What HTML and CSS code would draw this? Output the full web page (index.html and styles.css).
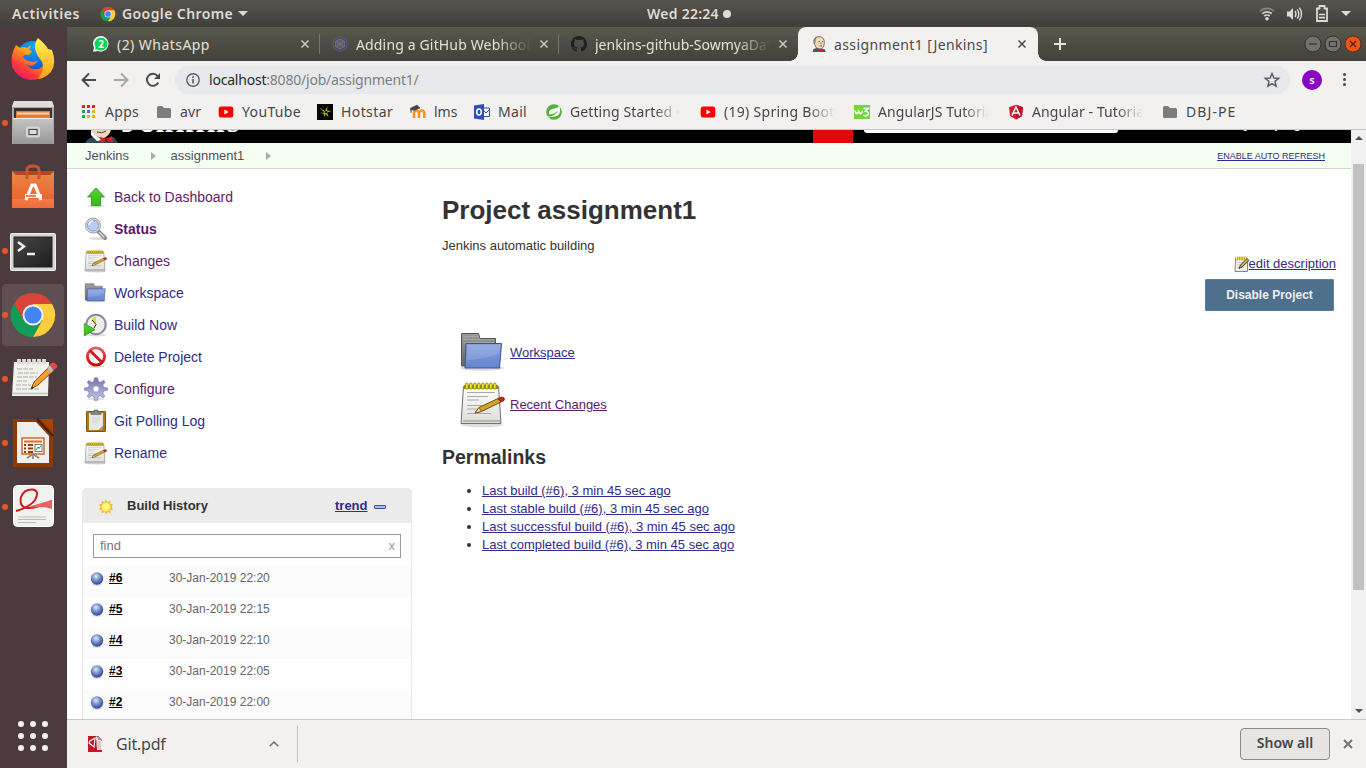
FILE: index.html
```html
<!DOCTYPE html>
<html lang="en">
<head>
<meta charset="utf-8">
<title>assignment1 [Jenkins]</title>
<link rel="stylesheet" href="styles.css">
</head>
<body>
<svg class="defs" width="0" height="0">
  <defs>
    <linearGradient id="gPaper" x1="0" y1="0" x2="0" y2="1"><stop offset="0" stop-color="#fff"/><stop offset="1" stop-color="#dcdcda"/></linearGradient>
    <linearGradient id="gBlue" x1="0" y1="0" x2="0" y2="1"><stop offset="0" stop-color="#8aa3dc"/><stop offset="1" stop-color="#6482ce"/></linearGradient>
    <linearGradient id="gGrey" x1="0" y1="0" x2="0" y2="1"><stop offset="0" stop-color="#9a9a98"/><stop offset="1" stop-color="#666"/></linearGradient>
    <linearGradient id="gGreen" x1="0" y1="0" x2="0" y2="1"><stop offset="0" stop-color="#57d03d"/><stop offset="1" stop-color="#2fc00a"/></linearGradient>
    <linearGradient id="gGear" x1="0" y1="0" x2="0" y2="1"><stop offset="0" stop-color="#7278b2"/><stop offset="1" stop-color="#c4c0e6"/></linearGradient>
    <linearGradient id="gRed" x1="0" y1="0" x2="0" y2="1"><stop offset="0" stop-color="#ee5a5a"/><stop offset="1" stop-color="#cc0000"/></linearGradient>
    <radialGradient id="gBall" cx=".42" cy=".33" r=".65"><stop offset="0" stop-color="#e4eee8"/><stop offset=".45" stop-color="#8097d0"/><stop offset="1" stop-color="#34479c"/></radialGradient>
    <radialGradient id="gSun"><stop offset="0" stop-color="#ffffa8"/><stop offset="1" stop-color="#fdf04a"/></radialGradient>
    <linearGradient id="gFox" x1="0.8" y1="0" x2=".1" y2="1"><stop offset="0" stop-color="#ffe226"/><stop offset=".35" stop-color="#ff9a16"/><stop offset=".68" stop-color="#ff3a3c"/><stop offset="1" stop-color="#e00b7a"/></linearGradient>
    <linearGradient id="gFlame" x1="0" y1="0" x2="0" y2="1"><stop offset="0" stop-color="#fff44f"/><stop offset="1" stop-color="#ffa018"/></linearGradient>
    <radialGradient id="gGlobe" cx=".5" cy=".15" r=".9"><stop offset="0" stop-color="#12a8f0"/><stop offset=".6" stop-color="#1365d8"/><stop offset="1" stop-color="#22306e"/></radialGradient>
    <linearGradient id="gBag" x1="0" y1="0" x2="0" y2="1"><stop offset="0" stop-color="#e88a48"/><stop offset=".75" stop-color="#ec6530"/><stop offset=".76" stop-color="#f37b48"/><stop offset="1" stop-color="#ef6c38"/></linearGradient>
    <linearGradient id="gTerm" x1="0" y1="0" x2="1" y2="1"><stop offset="0" stop-color="#444"/><stop offset=".5" stop-color="#333"/><stop offset="1" stop-color="#1c1c1c"/></linearGradient>
    <linearGradient id="gCab" x1="0" y1="0" x2="0" y2="1"><stop offset="0" stop-color="#c4c4c4"/><stop offset="1" stop-color="#989898"/></linearGradient>
    <symbol id="chrome" viewBox="0 0 48 48">
      <path d="M24 24 4.9 13A22 22 0 0 1 43.1 13Z" fill="#da4437"/>
      <path d="M24 24H3L4.9 13A22 22 0 0 0 24 46L33 29Z" fill="#119d58"/>
      <path d="M24 24V13H43.1A22 22 0 0 1 24 46L33.5 29Z" fill="#ffcd40"/>
      <path d="M5 13 14.5 29 17 15 24 13Z" fill="#da4437"/>
      <path d="M14.5 29A11 11 0 0 0 29 34L22.5 46A22 22 0 0 1 4.9 13Z" fill="#119d58"/>
      <circle cx="24" cy="24" r="10.5" fill="#f1f1f1"/><circle cx="24" cy="24" r="8.6" fill="#4285f4"/>
    </symbol>
    <symbol id="pad" viewBox="0 0 48 48">
      <ellipse cx="23" cy="45" rx="21" ry="2" fill="#0002"/>
      <path d="M4.500 6.500H39.500L42 43.500H2Z" fill="url(#gPaper)" stroke="#70706c"/>
      <path d="M4 41H41" stroke="#aaa9a4" stroke-width="1.500"/>
      <rect x="5" y="5" width="34" height="4" fill="#8d8a35"/>
      <path d="M8 12.500H36M8 16.500H29M8 20H20M8 25.500H26M8 29H22M8 33.500H32" stroke="#aaa"/>
      <g fill="#f2e63c" stroke="#8f8706" stroke-width=".9"><rect x="6.500" y="3" width="2.600" height="6" rx="1.300"/><rect x="10.500" y="3" width="2.600" height="6" rx="1.300"/><rect x="14.500" y="3" width="2.600" height="6" rx="1.300"/><rect x="18.500" y="3" width="2.600" height="6" rx="1.300"/><rect x="22.500" y="3" width="2.600" height="6" rx="1.300"/><rect x="26.500" y="3" width="2.600" height="6" rx="1.300"/><rect x="30.500" y="3" width="2.600" height="6" rx="1.300"/><rect x="34.500" y="3" width="2.600" height="6" rx="1.300"/></g>
      <path d="M16 33 20 27.500 39 18.500 42 22 22.500 31.500Z" fill="#d3a42a" stroke="#72500c"/>
      <path d="M16 33 20 27.500 22.500 31.500Z" fill="#e9d9a6" stroke="#72500c" stroke-width=".8"/>
      <path d="M39 18.500 43 17Q46.500 18 45 20.500L42 22Z" fill="#e01b1b" stroke="#7c2a1a"/>
    </symbol>
    <symbol id="folder" viewBox="0 0 48 48">
      <ellipse cx="23" cy="40" rx="22" ry="3" fill="#0002"/>
      <path d="M2.500 38V5.500H19.500L21 10.500H36.500V38Z" fill="url(#gGrey)" stroke="#555"/>
      <path d="M4 8.500H20M4 11.500H35M4 14.500H35" stroke="#aaa" stroke-width=".8"/>
      <path d="M7 15.500H42.500L40.500 40H6Z" fill="url(#gBlue)" stroke="#3c50a4"/>
      <path d="M8 17H41L40.500 25Q24 32 7.500 32Z" fill="#fff" opacity=".13"/>
    </symbol>
    <symbol id="ball" viewBox="0 0 14 14"><ellipse cx="7" cy="12.500" rx="5" ry="1.200" fill="#0002"/><circle cx="7" cy="6.500" r="6.200" fill="url(#gBall)"/></symbol>
    <symbol id="bfolder" viewBox="0 0 16 16"><path d="M1 3.500Q1 2 2.500 2H6L8 4H13.500Q15 4 15 5.500V12.500Q15 14 13.500 14H2.500Q1 14 1 12.500Z" fill="#7c7c7c"/></symbol>
    <symbol id="yt" viewBox="0 0 16 16"><rect x=".7" y="2.500" width="14.600" height="11" rx="2.500" fill="#f00"/><path d="M6.400 5.500V10.500L10.600 8Z" fill="#fff"/></symbol>
    <symbol id="cross" viewBox="0 0 10 10"><path d="M1.500 1.500 8.500 8.500M8.500 1.500 1.500 8.500" stroke="currentColor" stroke-width="1.500" fill="none"/></symbol>
    <symbol id="butler" viewBox="0 0 16 16">
      <path d="M1.500 16 2.500 13 7 11.500 14 13.500 14.500 16Z" fill="#3f5a72"/>
      <path d="M3 7Q2 .8 8 .6 13.500.6 13.300 7 13 12.800 8.800 13 5 13 4.300 10Z" fill="#f0dcb8" stroke="#4a423a" stroke-width=".7"/>
      <path d="M2.900 8Q1.500 1.500 6.500.8 4.500 3 4.700 5L4 8Z" fill="#8a857c"/>
      <path d="M7.500 5.500H9M11 5.500H12M8.500 10H11M10 6.500V8" stroke="#544" stroke-width=".8"/>
      <path d="M7 13 9.500 14 12 13V16L9.500 15 7 16Z" fill="#e02020"/>
    </symbol>
  </defs>
</svg>

<header class="panel">
  <span class="activities">Activities</span>
  <svg class="i16"><use href="#chrome"/></svg>
  <span class="appname">Google Chrome</span><i class="caret"></i>
  <span class="clock">Wed 22:24<i></i></span>
  <span class="tray">
    <svg width="16" height="16" viewBox="0 0 16 16" fill="none" stroke="#d0cfca" stroke-width="1.700"><path d="M1 5.200Q8-.4 15 5.200" opacity=".45"/><path d="M3.200 7.600Q8 4 12.800 7.600M5.200 10Q8 8 10.800 10"/><circle cx="8" cy="12.800" r="1.800" fill="#dfdbd2" stroke="none"/></svg>
    <svg width="17" height="16" viewBox="0 0 17 16"><path d="M1 5.500H3.500L7 2V14L3.500 10.500H1Z" fill="#dfdbd2"/><path d="M9 5Q11 8 9 11M11.200 3.300Q14.300 8 11.200 12.700M13.400 1.700Q17.600 8 13.400 14.300" fill="none" stroke="#dfdbd2" stroke-width="1.400"/></svg>
    <svg width="12" height="17" viewBox="0 0 12 17"><path d="M1 3.500H3.500V1H8.500V3.500H11V16H1Z" fill="none" stroke="#dfdbd2" stroke-width="1.800"/><path d="M3 9.500H9M3 12.700H9" stroke="#dfdbd2" stroke-width="1.700"/></svg>
    <i class="caret"></i>
  </span>
</header>

<div class="desktop">
  <nav class="dock">
    <div class="launch"><svg viewBox="0 0 48 48">
      <circle cx="24" cy="24" r="18" fill="url(#gGlobe)"/>
      <path d="M7 10 11 13Q14 11 18 13L22 10 20 15 23 16 20 20Q14 19 14 22L17 25Q26 29 29 25 24 34 17 29 23 37 32 33 40 26 36 17 44 23 40 33 35 45 22 45 8 44 3 31 1 20 7 10Z" fill="url(#gFox)"/>
      <path d="M29 3Q38 11 39 14L43 15Q48 28 42 37 35 44 29 44 38 32 31 24 22 12 29 3Z" fill="url(#gFlame)"/></svg></div>
    <div class="launch run"><svg viewBox="0 0 48 48">
      <path d="M5 2H43L45 7V45H3V7Z" fill="#a9a9a9"/><path d="M5 2H43L45 8H3Z" fill="#dedede"/><rect x="5" y="9" width="38" height="13" fill="#38322d"/>
      <path d="M7 12H41V20H7Z" fill="#ea7a2c"/><path d="M8 14.500H40" stroke="#f8d8b6" stroke-width="2"/><path d="M4 19H44V45H4Z" fill="url(#gCab)"/><path d="M4 19.500H44" stroke="#eee"/>
      <rect x="18" y="28.500" width="12" height="9" rx="1" fill="#b4b4b4" stroke="#d6d6d6" stroke-width="2"/><rect x="20" y="30.500" width="8" height="5" fill="#ddd" stroke="#444"/></svg></div>
    <div class="launch"><svg viewBox="0 0 48 48">
      <path d="M3 8H45V14H3Z" fill="#b6441f"/><path d="M3 8 7 12H41L45 8V45H3Z" fill="url(#gBag)"/><path d="M18 16V7Q18 3 24 3T30 7V16" fill="none" stroke="#c9542c" stroke-width="3"/>
      <path d="M17 37 23 22H26L32 37" fill="none" stroke="#fff" stroke-width="3.200"/><path d="M16 33H33" stroke="#fff" stroke-width="3.800"/><path d="M17 33H27" stroke="#ee6932" stroke-width="1.700"/></svg></div>
    <div class="launch run"><svg viewBox="0 0 48 48">
      <rect x="1.500" y="6.500" width="45" height="37" rx="1" fill="#d6d6d4" stroke="#eee"/><rect x="5" y="10" width="38" height="30" fill="url(#gTerm)" stroke="#222"/>
      <path d="M9 15 15 19.500 9 24M18 27H26" fill="none" stroke="#eee" stroke-width="2.500"/></svg></div>
    <div class="launch run active"><svg viewBox="0 0 48 48"><use href="#chrome"/></svg></div>
    <div class="launch run"><svg viewBox="0 0 48 48">
      <path d="M5 7H40L39 41H3Z" fill="#f2f2ec"/><path d="M3 38.500H39" stroke="#cbcbc5" stroke-width="2"/>
      <path d="M8 14H24M9 18H29M8 22H28M8 26H18M7 30H22M7 34H30" stroke="#999" stroke-width=".8" stroke-dasharray="5 1"/>
      <g fill="none" stroke="#ddd" stroke-width="1.800"><path d="M9 10V5H11V9M14 10V5H16V9M19 10V5H21V9M24 10V5H26V9M29 10V5H31V9M34 10V5H36V9"/></g>
      <path d="M22 34 25 27 39 13 43 17 29 30Z" fill="#f29c38" stroke="#8c4d12"/><path d="M38 13 41 10 45 15 42 18Z" fill="#bbb"/><path d="M41 9Q44 6 47 9T46 14L44 15Z" fill="#e44"/><path d="M22 34 23 31 25 33Z" fill="#222"/></svg></div>
    <div class="launch run"><svg viewBox="0 0 48 48">
      <path d="M4 0H31L44 13V48H4Z" fill="#8d3a05"/><path d="M31 0H44V13Z" fill="#a94207"/><path d="M8 3H27L40 17V44H8Z" fill="#eee"/><path d="M28 0 44 17" stroke="#4b1e04" stroke-width="2"/>
      <rect x="13" y="19" width="22" height="16" fill="#fff3e8" stroke="#c25818" stroke-width="1.300"/><path d="M15 22.500H33" stroke="#d9702c" stroke-width="2"/><path d="M15 26H24M15 29.500H24M15 33H24" stroke="#a13c08" stroke-width="1.800" stroke-dasharray="2 2 6"/>
      <rect x="26" y="25.500" width="7" height="7" fill="#fff" stroke="#777"/><path d="M27 31 29 28 30 29.500 32 26.500" fill="none" stroke="#289b38"/><path d="M18 39 24 35 30 39M24 35V40" fill="none" stroke="#888" stroke-width="1.700"/></svg></div>
    <div class="launch run"><svg viewBox="0 0 48 48">
      <rect x="4.500" y="2.500" width="40" height="41" rx="4" fill="#f1f1f0" stroke="#fff"/>
      <path d="M7 28Q21 24 26 17 31 8 24 6.500 15 6 12 14 10 23 17 25 26 26 43 18" fill="none" stroke="#d01c1c" stroke-width="2"/><path d="M22 23 43 17V26Q36 23 22 24.500Z" fill="#e46464"/><path d="M9 34H37M9 36.500H37M9 39.500H27" stroke="#bbb"/></svg></div>
    <div class="grid"><i></i><i></i><i></i><i></i><i></i><i></i><i></i><i></i><i></i></div>
  </nav>

  <div class="browser">
    <div class="tabs">
      <div class="tab">
        <svg class="i16" viewBox="0 0 16 16"><path d="M.2 15.800 1 11.500A7.700 7.700 0 1 1 5 15Z" fill="#fff"/><circle cx="8" cy="8" r="6.500" fill="#06d755"/><path d="M2 14 2.500 11 5 13Z" fill="#06d755"/><text x="8" y="11.700" text-anchor="middle" class="badge">2</text></svg>
        <span class="tl t-wa">(2) WhatsApp</span><svg class="x"><use href="#cross"/></svg></div>
      <div class="tab">
        <svg class="i16" viewBox="0 0 16 16" fill="none"><path d="M8 .8 14.500 4.400V11.600L8 15.200 1.500 11.600V4.400Z" stroke="#5c4f91" stroke-width="1.200"/><path d="M8 3 12.400 5.500V10.500L8 13 3.600 10.500V5.500ZM3.600 5.500 12.400 10.500M3.600 10.500 12.400 5.500M8 3V13M5.800 4.300 5.800 11.700M10.200 4.300V11.700" stroke="#76748a" stroke-width=".9"/></svg>
        <span class="tl fade t-gh">Adding a GitHub Webhook</span><svg class="x"><use href="#cross"/></svg></div>
      <div class="tab last">
        <svg class="i16" viewBox="0 0 16 16"><path fill="#1e2023" d="M8 0C3.580 0 0 3.580 0 8c0 3.540 2.290 6.530 5.470 7.590.4.070.55-.17.55-.38 0-.19-.01-.82-.01-1.490-2.010.37-2.530-.49-2.690-.94-.09-.23-.48-.94-.82-1.130-.28-.15-.68-.52-.01-.53.63-.01 1.080.58 1.230.82.72 1.210 1.870.87 2.330.66.070-.52.28-.87.51-1.070-1.780-.2-3.640-.89-3.640-3.950 0-.87.31-1.590.82-2.150-.08-.2-.36-1.020.08-2.120 0 0 .67-.21 2.200.82.64-.18 1.320-.27 2-.27s1.360.09 2 .27c1.530-1.040 2.200-.82 2.200-.82.44 1.100.16 1.920.08 2.120.51.56.82 1.270.82 2.150 0 3.070-1.870 3.750-3.650 3.950.29.25.54.73.54 1.480 0 1.070-.01 1.930-.01 2.200 0 .21.15.46.55.38A8.010 8.010 0 0 0 16 8c0-4.420-3.580-8-8-8Z"/></svg>
        <span class="tl fade t-je">jenkins-github-SowmyaDas</span><svg class="x"><use href="#cross"/></svg></div>
      <div class="tab current">
        <svg class="i16"><use href="#butler"/></svg>
        <span class="tl t-as">assignment1 [Jenkins]</span><svg class="x"><use href="#cross"/></svg></div>
      <svg class="plus" viewBox="0 0 12 12"><path d="M6 0V12M0 6H12" stroke="#e4e3dc" stroke-width="2"/></svg>
      <div class="winbtns">
        <svg viewBox="0 0 18 18"><circle cx="9" cy="9" r="8" fill="#74726b" stroke="#33322d"/><path d="M5 9H13" stroke="#33322d" stroke-width="1.200"/></svg>
        <svg viewBox="0 0 18 18"><circle cx="9" cy="9" r="8" fill="#74726b" stroke="#33322d"/><path d="M5.500 6.500H12.500V11.500H5.500Z" fill="none" stroke="#33322d" stroke-width="1.200"/></svg>
        <svg viewBox="0 0 18 18"><circle cx="9" cy="9" r="8" fill="#ed5518" stroke="#622c17"/><path d="M6 6 12 12M12 6 6 12" stroke="#552109" stroke-width="1.400"/></svg>
      </div>
    </div>

    <div class="toolbar">
      <svg class="nav" viewBox="0 0 16 16"><path d="M15 8H2M8 1.500 1.500 8 8 14.500" fill="none" stroke="#48494b" stroke-width="1.900"/></svg>
      <svg class="nav" viewBox="0 0 16 16"><path d="M1 8H14M8 1.500 14.500 8 8 14.500" fill="none" stroke="#a9a9a9" stroke-width="1.900"/></svg>
      <svg class="nav" viewBox="0 0 16 16"><path d="M13.300 10.500A6 6 0 1 1 12.600 4" fill="none" stroke="#48494b" stroke-width="1.900"/><path d="M15 1V7H9Z" fill="#48494b"/></svg>
      <div class="omni">
        <svg width="14" height="14" viewBox="0 0 14 14"><circle cx="7" cy="7" r="6.200" fill="none" stroke="#5c5f63" stroke-width="1.400"/><path d="M7 6V10.500M7 3.300V4.900" stroke="#5c5f63" stroke-width="1.600"/></svg>
        <span class="url"><b>localhost</b>:8080/job/assignment1/</span>
        <svg class="star" viewBox="0 0 16 16"><path d="M8 1.500 9.900 6 14.700 6.300 11 9.400 12.200 14.200 8 11.600 3.800 14.200 5 9.400 1.300 6.300 6.100 6Z" fill="none" stroke="#55585c" stroke-width="1.400"/></svg>
      </div>
      <span class="avatar">s</span>
      <span class="dots"><i></i><i></i><i></i></span>
    </div>

    <div class="marks">
      <a class="m-apps"><svg class="i16" viewBox="0 0 16 16"><path d="M1 1H4V4H1ZM6 1H9V4H6ZM11 1H14V4H11Z" fill="#e8201c"/><path d="M1 6H4V9H1Z" fill="#1fa55a"/><path d="M6 6H9V9H6Z" fill="#4468e8"/><path d="M11 6H14V9H11ZM6 11H9V14H6ZM11 11H14V14H11Z" fill="#f2ad16"/><path d="M1 11H4V14H1Z" fill="#1fa55a"/></svg><span>Apps</span></a>
      <a class="m-avr"><svg class="i16"><use href="#bfolder"/></svg><span>avr</span></a>
      <a class="m-yt"><svg class="i16"><use href="#yt"/></svg><span>YouTube</span></a>
      <a class="m-hot"><svg class="i16" viewBox="0 0 16 16"><rect width="16" height="16" fill="#050805"/><path d="M7.500 8.500 2.500 3.500 8 7 10.500 2 10 6.500 14.500 7 10 8.500 11.500 13 8 10 7.500 13.500 6.500 9.500 2.500 9Z" fill="#a3b82c"/><circle cx="9" cy="8" r="1.300" fill="#111"/></svg><span>Hotstar</span></a>
      <a class="m-lms"><svg class="i16" viewBox="0 0 16 16"><path d="M4 14V8.500Q6.200 4.500 9 8.500V14M9 8.500Q12.500 4 14.300 8.500V14" fill="none" stroke="#f7931e" stroke-width="2.500"/><path d="M0 4.500 7 1 10 4 4 6.500 1.500 5.500 1 9" fill="#444" stroke="#444" stroke-width=".6"/></svg><span>lms</span></a>
      <a class="m-mail"><svg class="i16" viewBox="0 0 16 16"><path d="M9 4H15.500V12.500H9" fill="#fff" stroke="#2f4fc0"/><path d="M9 6 12 9 15.500 5.500" fill="none" stroke="#2f4fc0"/><path d="M0 1.500 10 0V16L0 14.500Z" fill="#2c4dc4"/><ellipse cx="5" cy="8" rx="2.300" ry="3" fill="none" stroke="#fff" stroke-width="1.600"/></svg><span>Mail</span></a>
      <a class="long m-gs"><svg class="i16" viewBox="0 0 16 16"><circle cx="8" cy="8" r="7.800" fill="#52b13a"/><path d="M13.500 2Q15.500 9 11.500 11.800 8 13.500 3.500 12.700 10 11 12.500 6.500 8 10.500 3.500 10.500 1.500 6.500 6 5 11 4.500 13.500 2Z" fill="#f4fbf2"/><circle cx="3" cy="13" r=".7" fill="#fff"/></svg><span>Getting Started ·</span></a>
      <a class="long m-sb"><svg class="i16"><use href="#yt"/></svg><span>(19) Spring Boot</span></a>
      <a class="long m-aj"><svg class="i16" viewBox="0 0 16 16"><rect y="1" width="16" height="14" fill="#74d53c"/><path d="M1 6.500Q1.500 10 3.200 9.500L4.500 7 6 9.500Q7.500 10 8.500 7M9.500 4.500H14L11.500 7Q15 7.500 14 10.500 12 13 9.500 11" fill="none" stroke="#fff" stroke-width="1.600"/></svg><span>AngularJS Tutorial</span></a>
      <a class="long m-an"><svg class="i16" viewBox="0 0 16 16"><path d="M8 .8 15 3.300 14 12 8 15.500 2 12 1 3.300Z" fill="#dd1b2f"/><path d="M8 .8 15 3.300 14 12 8 15.500Z" fill="#bf1027"/><path d="M4 11.500 8 3 12 11.500M5.500 9H10.500" fill="none" stroke="#fff" stroke-width="1.500"/></svg><span>Angular - Tutorial</span></a>
      <a class="m-dbj"><svg class="i16"><use href="#bfolder"/></svg><span>DBJ-PE</span></a>
    </div>

    <div class="view">
      <div class="page">
        <div class="jhead">
          <svg class="jlogo" viewBox="0 0 34 13"><path d="M0 13 3 9 10 6 22 8 29 7 33 13Z" fill="#33475c"/><path d="M6 0H26Q24 6 19 8 10 8 6 0Z" fill="#f0d6b7"/><path d="M6 0 9 4 17 10 12 11 6 5Z" fill="#fff"/><path d="M12 2Q17 4 21 1" fill="none" stroke="#5a4030"/><path d="M15 7 21 9 27 6 28 12 22 11 16 13Z" fill="#e02020"/><circle cx="21.500" cy="10" r="1.500" fill="#8a1010"/></svg>
          <span class="jname">Jenkins</span><i class="jred"></i><i class="jsearch"></i><span class="juser">Sowmya D | log out</span>
        </div>
        <div class="crumbs"><span>Jenkins</span><i></i><span>assignment1</span><i></i><a>ENABLE AUTO REFRESH</a></div>
        <div class="cols">
          <aside>
            <div class="task seen"><svg viewBox="0 0 24 24"><ellipse cx="12" cy="21" rx="9" ry="1.500" fill="#0002"/><path d="M12 3 20.500 12H16.500V20.500H7.500V12H3.500Z" fill="url(#gGreen)" stroke="#30882a" stroke-width=".8"/></svg>Back to Dashboard</div>
            <div class="task seen strong"><svg viewBox="0 0 24 24"><ellipse cx="14" cy="21.500" rx="9" ry="1.500" fill="#0002"/><path d="M14 14 21 21" stroke="#888" stroke-width="4" stroke-linecap="round"/><path d="M15 15 20.500 20.500" stroke="#ddd" stroke-width="1.500"/><circle cx="9" cy="8.500" r="6.500" fill="#b9cbf2" stroke="#e3e3e3" stroke-width="2"/><circle cx="9" cy="8.500" r="7.500" fill="none" stroke="#888" stroke-width=".8"/><circle cx="9" cy="8.500" r="5.600" fill="none" stroke="#7187bd" stroke-width=".8"/><path d="M5 8Q5 4.500 9 4" stroke="#fff" fill="none" stroke-width="1.500"/></svg>Status</div>
            <div class="task seen"><svg><use href="#pad"/></svg>Changes</div>
            <div class="task"><svg><use href="#folder"/></svg>Workspace</div>
            <div class="task"><svg viewBox="0 0 24 24"><ellipse cx="13" cy="22" rx="9" ry="1.500" fill="#0002"/><circle cx="12" cy="11.500" r="9.700" fill="#eeeee9" stroke="#8a88a0" stroke-width="2"/><path d="M12 11 7.500 5.500 12 3.500Z" fill="#e2d43b"/><path d="M8 7 12 11.500 10 15" stroke="#222" fill="none"/><path d="M.3 10.500 11 16.500 .3 23Z" fill="url(#gGreen)" stroke="#258a1b" stroke-width=".7"/></svg>Build Now</div>
            <div class="task"><svg viewBox="0 0 24 24"><ellipse cx="12" cy="21.500" rx="9" ry="1.500" fill="#0002"/><circle cx="12" cy="11.500" r="8.600" fill="#fff" stroke="url(#gRed)" stroke-width="2.900"/><path d="M6 5.500 18 17.500" stroke="#d51a1a" stroke-width="3"/></svg>Delete Project</div>
            <div class="task seen"><svg viewBox="0 0 24 24"><ellipse cx="12" cy="22" rx="9" ry="1.500" fill="#0002"/><path fill-rule="evenodd" d="M10.600.8H13.400L14.300 4.500 16.500 5.400 19.500 3.300 21 5 18.800 8 19.600 10.300 23.500 11V13.200L19.600 14 18.800 16.200 20.800 19.200 19 20.700 16.200 18.700 14.300 19.500 13.400 23.300H10.600L9.700 19.500 7.700 18.700 5 20.700 3.200 19.200 5.200 16.200 4.400 14 .5 13.200V11L4.400 10.300 5.200 8 3.200 5 5 3.400 7.700 5.400 9.700 4.500ZM12 8.800A3.200 3.200 0 1 0 12 15.200 3.200 3.200 0 1 0 12 8.800Z" fill="url(#gGear)" stroke="#706d9d" stroke-width=".6"/></svg>Configure</div>
            <div class="task"><svg viewBox="0 0 24 24"><rect x="2.500" y="2.500" width="19" height="20" rx=".5" fill="#ad7a17" stroke="#7b570e"/><path d="M5 4H19V21H5Z" fill="#e6e6e4"/><path d="M19 16V21H14Z" fill="#999"/><path d="M14 21 14.500 17 19 16Z" fill="#fff"/><path d="M7 2.500H10V1H14V2.500H17V5.500H7Z" fill="#83837f" stroke="#5f5f5c" stroke-width=".6"/><path d="M8 9H16M8 11H16M8 13H14" stroke="#d0d0d0" stroke-width=".7"/></svg>Git Polling Log</div>
            <div class="task"><svg><use href="#pad"/></svg>Rename</div>

            <section class="history">
              <div class="hhead"><svg width="16" height="16" viewBox="0 0 16 16"><path d="M8 .6 9.400 3 12.500 1.800 12.200 4.700 15 5.500 13.500 8 15 10.500 12.200 11.300 12.500 14.200 9.400 13 8 15.400 6.600 13 3.500 14.200 3.800 11.300 1 10.500 2.500 8 1 5.500 3.800 4.700 3.500 1.800 6.600 3Z" fill="#f5b342"/><circle cx="8" cy="8" r="4.700" fill="url(#gSun)" stroke="#efcf3c" stroke-width=".7"/></svg><b>Build History</b><a>trend</a><i></i></div>
              <div class="find"><span>find</span><em>x</em></div>
              <div class="row"><svg><use href="#ball"/></svg><a>#6</a><span>30-Jan-2019 22:20</span></div>
              <div class="row"><svg><use href="#ball"/></svg><a>#5</a><span>30-Jan-2019 22:15</span></div>
              <div class="row"><svg><use href="#ball"/></svg><a>#4</a><span>30-Jan-2019 22:10</span></div>
              <div class="row"><svg><use href="#ball"/></svg><a>#3</a><span>30-Jan-2019 22:05</span></div>
              <div class="row"><svg><use href="#ball"/></svg><a>#2</a><span>30-Jan-2019 22:00</span></div>
            </section>
          </aside>
          <main>
            <h1>Project assignment1</h1>
            <p class="desc">Jenkins automatic building</p>
            <div class="edit"><svg viewBox="0 0 16 16"><path d="M1.500 3H13.500V15.500H1Z" fill="#f1f1ef" stroke="#777" stroke-width=".9"/><path d="M1.500 2.500H12.500" stroke="#8f8706" stroke-width="3.400"/><path d="M2 2.500H13" stroke="#f4ea30" stroke-width="3" stroke-dasharray="1.200 .6"/><path d="M3 6.500H11M3 9H8M3 11.500H10" stroke="#bbb" stroke-width=".8"/><path d="M5 12.500 6.500 9 13 2.500 15 4.500 8 11Z" fill="#c9ae62" stroke="#3a3014" stroke-width=".9"/></svg><a>edit description</a></div>
            <button class="disable">Disable Project</button>
            <div class="big"><svg><use href="#folder"/></svg><a>Workspace</a></div>
            <div class="big"><svg><use href="#pad"/></svg><a class="seen">Recent Changes</a></div>
            <h2>Permalinks</h2>
            <ul>
              <li><a>Last build (#6), 3 min 45 sec ago</a></li>
              <li><a>Last stable build (#6), 3 min 45 sec ago</a></li>
              <li><a>Last successful build (#6), 3 min 45 sec ago</a></li>
              <li><a>Last completed build (#6), 3 min 45 sec ago</a></li>
            </ul>
          </main>
        </div>
      </div>
      <div class="scroll"><i class="up"></i><i class="thumb"></i><i class="down"></i></div>
    </div>

    <footer class="shelf">
      <svg class="i16" viewBox="0 0 16 16"><path d="M1 0H11L15 4V16H1Z" fill="#c9142b"/><path d="M9 0 15 5V14H10Z" fill="#f4eded"/><path d="M11 5V13M13 5V14" stroke="#aaa"/><path d="M3 5 8 2 7 11 2 7Z" fill="none" stroke="#fff" stroke-width="1.100"/><path d="M11 0V4H15Z" fill="#999"/></svg>
      <span class="file">Git.pdf</span>
      <svg class="chev" viewBox="0 0 10 6"><path d="M.7 5.300 5 1 9.300 5.300" fill="none" stroke="#707070" stroke-width="1.500"/></svg>
      <span class="showall">Show all</span>
      <svg class="close" viewBox="0 0 10 10"><path d="M1 1 9 9M9 1 1 9" stroke="#737373" stroke-width="1.900"/></svg>
    </footer>
  </div>
</div>
</body>
</html>
```
FILE: styles.css
```css
* { box-sizing: border-box; }
body { margin: 0; width: 1366px; height: 768px; overflow: hidden; display: flex; flex-direction: column; font-family: "Noto Sans", sans-serif; font-size: 14px; color: #47474a; }
.defs { position: absolute; }
svg { display: block; flex: none; overflow: visible; }
.i16 { width: 16px; height: 16px; }
span { white-space: nowrap; }

.panel { height: 27px; flex: none; position: relative; display: flex; align-items: center; padding: 0 15px 0 12px; background: linear-gradient(#57544c, #403f3a); color: #dfdbd2; font-weight: 600; font-size: 14px; }
.activities { width: 88px; letter-spacing: .55px; }
.appname { margin-left: 6px; letter-spacing: .4px; }
.caret { border: 5px solid transparent; border-top-color: #dfdbd2; border-bottom: 0; margin-left: 5px; }
.clock { position: absolute; left: 647px; display: flex; align-items: center; letter-spacing: .25px; }
.clock i { width: 8px; height: 8px; border-radius: 50%; background: #dfdbd2; margin-left: 4px; }
.tray { margin-left: auto; display: flex; align-items: center; gap: 12px; }
.tray .caret { margin-left: 1px; }
.tray svg { margin-left: -1px; }
.tray svg:nth-child(3) { margin-left: 1px; }
.desktop { flex: 1; min-height: 0; display: flex; }
.dock { width: 67px; flex: none; display: flex; flex-direction: column; padding-top: 1px; background: #4b3a3e; }
.launch { position: relative; height: 62px; margin: 0 3px 2px 2px; flex: none; display: flex; align-items: center; justify-content: center; border-radius: 4px; }
.launch svg { width: 48px; height: 48px; }
.launch.active { background: #5f4f53; }
.launch.run::before { content: ""; position: absolute; left: 0; top: 28px; width: 6px; height: 6px; border-radius: 50%; background: #e95420; }
.grid { margin: auto 0 17px 18px; display: grid; grid-template-columns: repeat(3, 6px); gap: 6px; }
.grid i { width: 6px; height: 6px; border-radius: 50%; background: #f2f1f0; }

.browser { flex: 1; min-width: 0; display: flex; flex-direction: column; background: #f2f1f0; }
.tabs { height: 34px; flex: none; display: flex; align-items: center; padding-left: 14px; background: linear-gradient(#5a594e, #42413b); color: #e2e1da; }
.tab { position: relative; width: 239px; height: 34px; display: flex; align-items: center; padding: 0 10px 0 12px; }
.tab:not(.last):not(.current)::after { content: ""; position: absolute; right: 0; top: 7px; width: 1px; height: 20px; background: #77766d; }
.tl { margin-left: 8px; width: 183px; overflow: hidden; flex: none; }
.fade { width: 175px; margin-right: 8px; -webkit-mask-image: linear-gradient(90deg, #000 80%, transparent); mask-image: linear-gradient(90deg, #000 80%, transparent); }
.t-wa { letter-spacing: .45px; }
.t-gh { letter-spacing: .15px; }
.t-as { letter-spacing: .39px; }
.tab .x { width: 10px; height: 10px; color: #c9c8c1; }
.tab.current { width: 240px; background: #f2f1f0; color: #4a4a4a; border-radius: 8px 8px 0 0; padding-left: 13px; }
.tab.current::before, .tab.current::after { content: ""; position: absolute; bottom: 0; width: 8px; height: 8px; }
.tab.current::before { left: -8px; background: radial-gradient(circle at 0 0, transparent 7.5px, #f2f1f0 8px); }
.tab.current::after { right: -8px; background: radial-gradient(circle at 100% 0, transparent 7.5px, #f2f1f0 8px); }
.tab.current .tl { margin-left: 7px; }
.tab.current .x { color: #4a4a4a; }
.badge { font: bold 10px "Noto Sans", sans-serif; fill: #fff; }
.plus { width: 12px; height: 12px; margin-left: 16px; }
.winbtns { margin-left: auto; display: flex; gap: 2px; padding-right: 4px; }
.winbtns svg { width: 18px; height: 18px; }

.toolbar { height: 37px; flex: none; display: flex; align-items: center; padding-left: 14px; }
.nav { width: 16px; height: 16px; margin-right: 16px; }
.omni { width: 1115px; height: 28px; margin-left: -2px; background: #e7e8ec; border-radius: 14px; display: flex; align-items: center; padding: 0 10px 0 11px; color: #7c7f84; }
.url { margin-left: 9px; letter-spacing: -.21px; }
.url b { font-weight: 400; color: #2a2b2d; }
.star { width: 16px; height: 16px; margin-left: auto; }
.avatar { width: 20px; height: 20px; margin-left: 12px; border-radius: 50%; background: #8700c4; color: #fff; font: 600 11px/19px "Noto Sans", sans-serif; text-align: center; }
.dots { width: 3px; margin-left: 21px; display: grid; gap: 2px; }
.dots i { width: 3px; height: 3px; border-radius: 50%; background: #48494b; }
.marks { height: 32px; flex: none; display: flex; align-items: center; gap: 16px; padding: 0 0 4px 14px; border-bottom: 1px solid #c8c8c8; }
.marks a { display: flex; gap: 8px; align-items: center; flex: none; }
.m-apps { width: 59px; letter-spacing: .3px; } .m-avr { width: 46px; letter-spacing: .2px; } .m-yt { width: 83px; letter-spacing: .35px; } .m-hot { width: 77px; letter-spacing: .4px; } .m-lms { width: 48px; } .m-mail { width: 56px; letter-spacing: .3px; }
.m-gs { letter-spacing: .1px; } .m-sb { letter-spacing: .3px; } .m-aj { letter-spacing: .1px; } .m-an { letter-spacing: .1px; } .m-dbj { letter-spacing: 1.1px; }
.long { width: 138px; }
.long span { width: 111px; overflow: hidden; -webkit-mask-image: linear-gradient(90deg, #000 76%, transparent); mask-image: linear-gradient(90deg, #000 76%, transparent); }

.view { flex: 1; min-height: 0; display: flex; background: #fff; font-family: "Liberation Sans", Arial, sans-serif; font-size: 13px; color: #333; }
.page { flex: 1; min-width: 0; overflow: hidden; }
.page a { color: #302c8a; text-decoration: underline; }
.page .seen, .page a.seen { color: #5c1a69; }
.jhead { height: 13px; background: #000; color: #fff; display: flex; align-items: flex-start; overflow: hidden; }
.jlogo { width: 34px; height: 13px; margin: 0 0 0 18px; }
.jname { font: bold 32px/31px "Liberation Serif", serif; margin: -24px 0 0 2px; width: 692px; letter-spacing: 2.200px; }
.jred { width: 40px; height: 13px; background: #e00808; }
.jsearch { width: 254px; height: 3px; background: #fff; border-radius: 0 0 4px 4px; margin-left: 11px; }
.juser { font: bold 13px/15px "Liberation Sans", sans-serif; margin: -14px 0 0 87px; }
.crumbs { height: 26px; display: flex; align-items: center; padding: 0 26px 0 18px; background: #f4fef2; border-bottom: 1px solid #d0d7cd; color: #4d545d; }
.crumbs i { border: 4px solid transparent; border-left: 5px solid #aaa; border-right: 0; margin: 1px 15px 0 21.500px; }
.crumbs a { margin-left: auto; font-size: 9px; }
.cols { display: flex; }
aside { width: 345px; padding: 12px 0 0 15px; flex: none; }
.task { height: 32px; display: flex; align-items: center; padding-left: 2px; font-size: 14px; color: #302c8a; }
.task svg { width: 24px; height: 24px; margin-right: 6px; }
.strong { font-weight: bold; }
.history { margin-top: 19px; width: 330px; border: 1px solid #e9e9e9; border-radius: 5px 5px 0 0; }
.hhead { height: 35px; margin: -1px -1px 0; padding-left: 16px; background: #ebebeb; border-radius: 5px 5px 0 0; display: flex; align-items: center; }
.hhead svg { margin-top: 3px; }
.hhead b { width: 208px; margin-left: 13px; }
.hhead a { font-weight: bold; }
.hhead i { width: 12px; height: 4px; border: 1px solid #3c50a4; border-radius: 1px; background: #a9bce8; margin: 3px 0 0 6px; }
.find { height: 24px; margin: 11px 10px 8px; border: 1px solid #999; display: flex; align-items: center; justify-content: space-between; padding: 0 5px 1px 6px; color: #777; }
.find em { font-style: normal; color: #999; }
.row { height: 31px; display: flex; align-items: flex-start; padding: 5px 0 0 7px; font-size: 12px; color: #666; }
.row:nth-child(odd) { background: #fbfbfb; }
.row svg { width: 14px; height: 14px; margin-top: 1px; }
.page .row a { font-weight: bold; color: #000; width: 60px; margin-left: 5px; }
main { flex: 1; padding: 0 15px 0 30px; }
h1 { font-size: 26px; line-height: 30px; margin: 26px 0 0; }
.desc { margin: 13px 0 0; line-height: 16px; }
.edit { display: flex; justify-content: flex-end; align-items: center; height: 16px; margin-top: 1px; }
.edit svg { width: 16px; height: 16px; margin: 1px -1px 0 0; }
.disable { display: block; margin: 8px 2px 17px auto; width: 129px; height: 32px; border: 1px solid #5683a4; border-radius: 1px; background: #4f708d; color: #eee; font: bold 12px "Liberation Sans", sans-serif; }
.big { height: 48px; display: flex; align-items: center; padding-left: 17px; margin-bottom: 4px; gap: 3px; }
.big svg { width: 48px; height: 48px; }
h2 { font-size: 19.500px; line-height: 24px; margin: 17px 0 13px; }
ul { margin: 0; padding-left: 40px; }
li { line-height: 18px; }
.scroll { width: 15px; flex: none; background: #f1f1f1; display: flex; flex-direction: column; align-items: center; }
.up { border: 4px solid transparent; border-bottom-color: #505050; border-top: 0; margin-top: 6px; }
.thumb { width: 11px; height: 426px; background: #c1c1c1; margin: 24px 0 0 0; }
.down { border: 4px solid transparent; border-top-color: #505050; border-bottom: 0; margin: auto 0 6px; }
.shelf { height: 49px; flex: none; border-top: 1px solid #c8c8c8; display: flex; align-items: center; padding-left: 20px; }
.file { margin-left: 13px; width: 153px; font-size: 16px; letter-spacing: -.2px; }
.chev { width: 10px; height: 6px; margin-right: 18px; }
.chev + .showall { margin-left: auto; }
.showall { width: 90px; height: 32px; border: 1px solid #8b8b8b; border-radius: 4px; background: #e6e5e3; line-height: 28px; text-align: center; font-weight: 600; }
.close { width: 10px; height: 10px; margin: 0 13px; }
.shelf::before { content: ""; width: 1px; height: 36px; background: #c6c6c4; order: 1; }
.shelf .showall, .shelf .close { order: 2; }
```
